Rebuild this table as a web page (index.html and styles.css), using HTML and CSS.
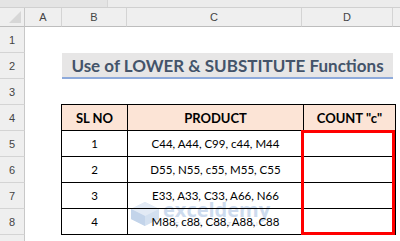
FILE: index.html
```html
<!DOCTYPE html>
<html>
<head>
<meta charset="utf-8">
<link rel="stylesheet" href="styles.css">
</head>
<body>
<div class="topbar"><div class="tb-a"></div><div class="tb-b"></div></div>
<div class="sheet">
  <div class="corner"><span class="tri"></span></div>
  <div class="colh">A</div>
  <div class="colh">B</div>
  <div class="colh">C</div>
  <div class="colh">D</div>
  <div class="colh last"></div>

  <div class="rowh r1">1</div>
  <div class="rowh r2">2</div>
  <div class="rowh r3">3</div>
  <div class="rowh r4">4</div>
  <div class="rowh r5">5</div>
  <div class="rowh r6">6</div>
  <div class="rowh r7">7</div>
  <div class="rowh r8">8</div>
  <div class="rowh r9"></div>

  <div class="title">Use of LOWER &amp; SUBSTITUTE Functions</div>

  <div class="wm">
    <svg class="wm-logo" width="30" height="26" viewBox="0 0 30 26">
      <path d="M15 1 L29 8 L29 18 L15 25 L1 18 L1 8 Z" fill="#d3e0f0"/>
      <path d="M15 1 L29 8 L15 15 L1 8 Z" fill="#e2eaf5"/>
      <path d="M15 15 L15 25 L1 18 L1 8 Z" fill="#c3d4ea"/>
    </svg>
    <div class="wm-text">
      <span class="wm-big">exceldemy</span>
      <span class="wm-small">EXCEL · DATA · BI</span>
    </div>
  </div>

  <table class="data">
    <tr class="head"><td class="cb">SL NO</td><td class="cc">PRODUCT</td><td class="cd">COUNT "c"</td></tr>
    <tr><td>1</td><td>C44, A44, C99, c44, M44</td><td></td></tr>
    <tr><td>2</td><td>D55, N55, c55, M55, C55</td><td></td></tr>
    <tr><td>3</td><td>E33, A33, C33, A66, N66</td><td></td></tr>
    <tr><td>4</td><td>M88, c88, C88, A88, C88</td><td></td></tr>
  </table>

  <div class="redbox"></div>
</div>
</body>
</html>
```
FILE: styles.css
```css
html, body {
  margin: 0;
  padding: 0;
  background: #ffffff;
  width: 400px;
  height: 241px;
  overflow: hidden;
  font-family: Lato, "Open Sans", sans-serif;
}
.topbar {
  height: 7px;
  background: #e9e9e9;
  border-bottom: 1px solid #d0d0d0;
  display: flex;
}
.tb-a {
  width: 107px;
  border-right: 1px solid #d6d6d6;
  background: #e4e4e4;
}
.tb-b {
  flex: 1;
  background: #ececec;
}
.sheet {
  display: grid;
  grid-template-columns: 25px 37px 65px 175px 91px 7px;
  grid-template-rows: 19px repeat(8, 26px) 6px;
  position: relative;
}
.corner {
  grid-column: 1;
  grid-row: 1;
  background: #efefef;
  border-right: 1px solid #c8c8c8;
  border-bottom: 1px solid #bdbdbd;
  box-sizing: border-box;
  position: relative;
}
.tri {
  position: absolute;
  right: 3px;
  bottom: 3px;
  width: 0;
  height: 0;
  border-left: 12px solid transparent;
  border-bottom: 12px solid #d7d7d7;
}
.colh {
  grid-row: 1;
  background: #efefef;
  border-right: 1px solid #d4d4d4;
  border-bottom: 1px solid #bdbdbd;
  box-sizing: border-box;
  font-family: "Liberation Sans", sans-serif;
  font-size: 11px;
  color: #444;
  display: flex;
  align-items: center;
  justify-content: center;
}
.colh.last { border-right: none; }
.rowh {
  grid-column: 1;
  background: #efefef;
  border-right: 1px solid #c8c8c8;
  border-bottom: 1px solid #d4d4d4;
  box-sizing: border-box;
  font-family: "Liberation Sans", sans-serif;
  font-size: 11px;
  color: #444;
  display: flex;
  align-items: center;
  justify-content: center;
}
.r1 { grid-row: 2; }
.r2 { grid-row: 3; }
.r3 { grid-row: 4; }
.r4 { grid-row: 5; }
.r5 { grid-row: 6; }
.r6 { grid-row: 7; }
.r7 { grid-row: 8; }
.r8 { grid-row: 9; }
.r9 { grid-row: 10; border-bottom: none; }

.title {
  grid-column: 3 / 6;
  grid-row: 3;
  background: #e7e6e6;
  border-bottom: 2px solid #8eaadb;
  box-sizing: border-box;
  color: #44546a;
  font-weight: 700;
  font-size: 17px;
  display: flex;
  align-items: center;
  justify-content: center;
  padding-top: 1px;
}

.data {
  grid-column: 3 / 6;
  grid-row: 5 / 10;
  border-collapse: collapse;
  width: 332px;
  margin-left: -1px;
  margin-top: -1px;
  table-layout: fixed;
  position: relative;
  z-index: 1;
}
.data td {
  border: 1px solid #000;
  height: 25px;
  padding: 0;
  text-align: center;
  font-size: 11.5px;
  color: #000;
}
.data .cb { width: 65px; }
.data .cc { width: 175px; }
.data .cd { width: 91px; }
.data .head td {
  background: #fce4d6;
  font-weight: 700;
  font-size: 13px;
  color: #000;
}
.redbox {
  grid-column: 5;
  grid-row: 6 / 10;
  border: 3px solid #ff0000;
  margin: -1px -2px 0 -1px;
  z-index: 2;
}
.wm {
  position: absolute;
  left: 130px;
  top: 192px;
  display: flex;
  align-items: center;
  gap: 3px;
  pointer-events: none;
  z-index: 0;
}
.wm-text {
  display: flex;
  flex-direction: column;
  line-height: 1;
}
.wm-big {
  font-family: "Open Sans", sans-serif;
  font-weight: 700;
  font-size: 20px;
  color: #cddbee;
}
.wm-small {
  font-family: "Liberation Sans", sans-serif;
  font-size: 6px;
  color: #cfd7e2;
  letter-spacing: 2px;
  margin-left: 12px;
  margin-top: 1px;
}
```
